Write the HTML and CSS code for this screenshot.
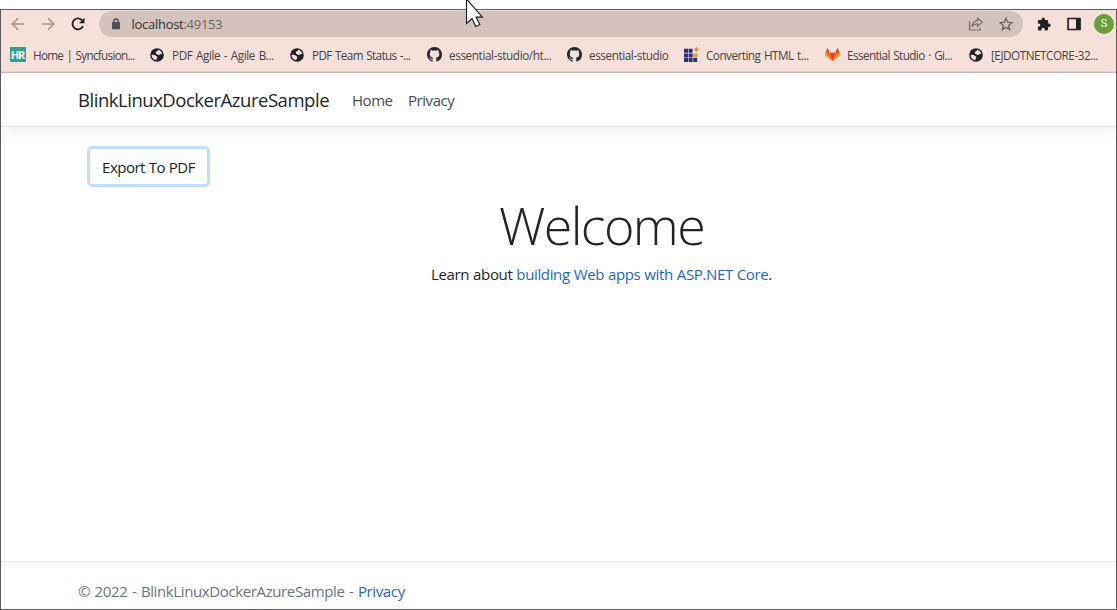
FILE: index.html
```html
<!DOCTYPE html>
<html lang="en">
<head>
<meta charset="utf-8">
<title>BlinkLinuxDockerAzureSample</title>
<link rel="stylesheet" href="styles.css">
</head>
<body>
<svg class="defs" width="0" height="0" aria-hidden="true">
  <symbol id="globe" viewBox="0 0 14 14"><circle cx="7" cy="7" r="6.8" fill="#202124"/><path d="M1.500 7.200C3 6.400 4.800 6.700 5.500 7.600c.5.800 1.700.4 1.800 1.600.1 1-.9 1.200-.8 2.900C3.800 12 1.700 9.800 1.500 7.200ZM5.800 4.600c.2-1.300 1.700-1.100 2.100-2 .2-.4.2-.6.3-.9 2 .5 3.500 1.900 4 3.900-.8.8-1.600.4-2.300 1-.6.6-1.500.7-2.100.1-.6-.7-2.200-.4-2-2.100Z" fill="#f6e1da"/></symbol>
  <symbol id="github" viewBox="0 0 16 16"><path fill="#24292f" d="M8 0C3.580 0 0 3.580 0 8c0 3.540 2.290 6.530 5.470 7.590.4.070.55-.17.55-.38 0-.19-.01-.82-.01-1.490-2.010.37-2.530-.49-2.690-.94-.09-.23-.48-.94-.82-1.130-.28-.15-.68-.52-.01-.53.63-.01 1.080.58 1.230.82.72 1.210 1.870.87 2.330.66.07-.52.28-.87.51-1.070-1.780-.2-3.640-.89-3.640-3.950 0-.87.31-1.590.82-2.150-.08-.2-.36-1.020.08-2.120 0 0 .67-.21 2.200.82.64-.18 1.320-.27 2-.27s1.360.09 2 .27c1.530-1.040 2.200-.82 2.200-.82.44 1.100.16 1.920.08 2.120.51.56.82 1.270.82 2.150 0 3.070-1.870 3.750-3.650 3.950.29.25.54.73.54 1.480 0 1.070-.01 1.930-.01 2.200 0 .21.15.46.55.38A8.010 8.010 0 0 0 16 8c0-4.420-3.580-8-8-8Z"/></symbol>
</svg>
<div class="window">
  <header class="chrome">
    <div class="toolbar">
      <div class="nav-icons">
        <svg width="14" height="14" viewBox="0 0 14 14" fill="none" stroke="#a3928f" stroke-width="1.5"><path d="M13 7H1.500M7 1.300 1.300 7 7 12.700"/></svg>
        <svg width="14" height="14" viewBox="0 0 14 14" fill="none" stroke="#a3928f" stroke-width="1.500"><path d="M1 7h11.500M7 1.300 12.700 7 7 12.700"/></svg>
        <svg width="14" height="14" viewBox="0 0 14 14"><path d="M12 9.200A5.500 5.500 0 1 1 11.300 3.400L12.500 4.800" fill="none" stroke="#202124" stroke-width="1.800"/><path d="M13.500.8v5.500H8Z" fill="#202124"/></svg>
      </div>
      <div class="omnibox">
        <svg width="10" height="12" viewBox="0 0 10 12"><rect x="1" y="4" width="8" height="7.300" rx="1" fill="#4d5156"/><path d="M2.800 5V3.200a2.200 2.200 0 0 1 4.400 0V5" fill="none" stroke="#4d5156" stroke-width="1.300"/></svg>
        <span class="url">localhost<span class="port">:49153</span></span>
        <svg class="share" width="16" height="14" viewBox="0 0 16 14" fill="none" stroke="#746d6c" stroke-width="1.200"><path d="M1.500 4v9h10.700v-2.500M9.500 1.200 14.300 5.200 9.500 9.200V6.800C7 6.700 5 7.600 3.800 9.700 4.200 6.200 6.100 4 9.500 3.600Z"/></svg>
        <svg width="14" height="14" viewBox="0 0 14 14" fill="none" stroke="#65605f" stroke-width="1.300"><path d="m7 1.300 1.700 3.900 4.200.4-3.200 2.800 1 4.200L7 10.400l-3.700 2.200 1-4.200L1.100 5.600l4.200-.4Z"/></svg>
      </div>
      <div class="actions">
        <svg width="14" height="14" viewBox="1 0 23 24"><path fill="#202124" d="M21 11h-1.500V7c0-1.100-.9-2-2-2H14V3.500a2.800 2.800 0 0 0-5.600 0V5H4C2.900 5 2 5.900 2 7v4h1.700a2.900 2.900 0 0 1 0 5.700H2V21c0 1.100.9 2 2 2h4.200v-1.700a2.800 2.800 0 0 1 5.600 0V23h3.700c1.100 0 2-.9 2-2v-4H21a3 3 0 0 0 0-6Z"/></svg>
        <svg width="14" height="14" viewBox="0 0 14 14"><path d="M1.100 1.500h11.800v11H1.100Z" fill="none" stroke="#202124" stroke-width="1.700"/><path d="M9 1h4.500v12H9Z" fill="#202124"/></svg>
        <span class="avatar">S</span>
      </div>
    </div>
    <nav class="bookmarks">
      <a><span class="hr">HR</span><span class="b1">Home | Syncfusion...</span></a>
      <a><svg class="ico"><use href="#globe"/></svg><span class="b2">PDF Agile - Agile B...</span></a>
      <a><svg class="ico"><use href="#globe"/></svg><span class="b3">PDF Team Status -...</span></a>
      <a><svg class="ico git"><use href="#github"/></svg><span class="b4">essential-studio/ht...</span></a>
      <a><svg class="ico git"><use href="#github"/></svg><span class="b5">essential-studio</span></a>
      <a><svg class="ico git" viewBox="0 0 15 15"><path fill="#27317c" d="M0 1.800h4v4H0ZM4.600 1.800h4v4h-4ZM0 6.400h4v4H0ZM4.600 6.400h4v4h-4ZM0 11h4v4H0ZM4.600 11h4v4h-4ZM9.200 11h4v4h-4Z"/><path fill="#f7941d" d="M9.200 6.400h4v4h-4ZM12.400 0l2.600 2.600-2.600 2.600-2.600-2.600Z"/></svg><span class="b6">Converting HTML t...</span></a>
      <a><svg class="ico git" viewBox="0 0 16 16"><path fill="#fc6d26" d="m8 15-7.500-5.700L.2 7.500 2.700 1l2.200 5.200h6.200L13.300 1l2.500 6.500-.3 1.800Z"/><path fill="#e24329" d="m8 15-3.100-8.800h6.200ZM2.700 1l2.200 5.200H.7ZM13.300 1l2.200 5.200h-4.400Z"/><path fill="#fca326" d="M.7 6.200 8 15 .4 9.400Zm14.600 0L8 15l7.600-5.600Z"/></svg><span class="b7">Essential Studio · Gi...</span></a>
      <a><svg class="ico"><use href="#globe"/></svg><span class="b8">[EJDOTNETCORE-32...</span></a>
    </nav>
  </header>
  <div class="navbar">
    <a class="brand">BlinkLinuxDockerAzureSample</a>
    <a class="link home">Home</a>
    <a class="link privacy">Privacy</a>
  </div>
  <main>
    <button class="export"><span>Export To PDF</span></button>
    <div class="hero">
      <h1>Welcome</h1>
      <p>Learn about <a>building Web apps with ASP.NET Core</a>.</p>
    </div>
  </main>
  <footer><span>© 2022 - BlinkLinuxDockerAzureSample - <a>Privacy</a></span></footer>
</div>
<svg class="cursor" width="20" height="28" viewBox="0 0 20 28"><path d="M1.500-1v24.500L7 18.500l3.800 8 4-1.900-3.700-7.500h6.300Z" fill="#fff" stroke="#111827" stroke-width="1.100"/></svg>
</body>
</html>
```
FILE: styles.css
```css
* { box-sizing: border-box; }
body {
  margin: 0;
  height: 610px;
  padding-top: 9px;
  overflow: hidden;
  background: #fff;
  color: #212529;
  font: 15px/22px "Open Sans", "Noto Sans", sans-serif;
}
.defs { position: absolute; }
svg { display: block; flex: none; }
span, a { white-space: nowrap; }
.window {
  height: 601px;
  border: 1px solid #5d5b5c;
  display: flex;
  flex-direction: column;
}
.chrome {
  height: 63px;
  flex: none;
  background: #f6e1da;
  border-bottom: 1px solid #c9b9b4;
  box-shadow: inset 0 -1px #e8d5cf;
}
.toolbar { display: flex; align-items: center; height: 28px; padding: 1px 2px 1px 10px; }
.nav-icons { display: flex; gap: 16px; width: 88px; flex: none; }
.omnibox {
  display: flex;
  align-items: center;
  width: 924px;
  height: 26px;
  padding: 0 10px 0 12px;
  border-radius: 13px;
  background: #d4c2bc;
}
.url { margin-left: 10.5px; flex: 1; font-size: 13px; letter-spacing: -.28px; color: #303134; }
.port { color: #6b6463; }
.share { margin-right: 15px; }
.actions { display: flex; align-items: center; margin-left: 14px; gap: 16px; }
.avatar {
  width: 20px; height: 20px; margin-left: -3px;
  border-radius: 50%;
  background: #689f38;
  color: #fff;
  font: 11px/20px Roboto, sans-serif;
  text-align: center;
}
.bookmarks {
  display: grid;
  grid-template-columns: 139px 140px 137px 140px 117px 141px 144px 140px;
  padding: 1px 0 0 9px;
  height: 32px;
  align-items: center;
  font-size: 11.7px;
  line-height: 16px;
  word-spacing: 1px;
  color: #474241;
}
.bookmarks a { display: flex; align-items: center; }
.hr {
  width: 16px; height: 15px; margin-right: 7px;
  background: #2aa487;
  color: #fff;
  font: bold 11px/15px "Open Sans", sans-serif;
  letter-spacing: -1px;
  text-indent: -1px;
  text-align: center;
}
.b1 { letter-spacing: -.7px; }
.b2 { letter-spacing: -.4px; }
.b3 { letter-spacing: -.63px; }
.b4 { letter-spacing: -.37px; }
.b5 { letter-spacing: -.4px; }
.b6 { letter-spacing: -.5px; }
.b7 { letter-spacing: -.57px; }
.b8 { letter-spacing: -.46px; }
.ico { width: 14px; height: 14px; margin: 0 8px 0 1px; }
.git { width: 15px; height: 15px; margin: 0 7px 0 1px; }
.navbar {
  display: flex;
  align-items: center;
  height: 54px;
  flex: none;
  padding: 0 0 0 77px;
  border-bottom: 1px solid #e4e7ea;
  box-shadow: 0 6px 14px rgba(0, 0, 0, .055);
}
.brand { width: 274px; font-size: 18.500px; letter-spacing: -.47px; }
.link { color: #484b4d; letter-spacing: -.45px; }
.home { width: 56px; }
main { flex: 1; padding: 20px 0 0 87px; }
.export {
  display: block;
  width: 121px;
  height: 39px;
  padding: 1px 0 0;
  border: 0;
  border-radius: 4px;
  background: #fff;
  box-shadow: inset 0 0 0 2px #bfdeff, 0 0 0 1px #bfdeff;
  color: #212529;
  font: inherit;
  letter-spacing: -.52px;
  word-spacing: .5px;
}
.hero { width: 1027px; margin-top: 10px; text-align: center; letter-spacing: -.36px; word-spacing: .4px; }
h1 { margin: 0; font-weight: 300; font-size: 52px; line-height: 58px; letter-spacing: -1.6px; }
p { margin: 9px 0 0; }
.hero a, footer a { color: #1b66d2; }
footer {
  height: 48px;
  padding: 18px 0 0 77px;
  border-top: 1px solid #e4e7ea;
  color: #6c757d;
  letter-spacing: -.38px;
  word-spacing: 1px;
}
.cursor { position: absolute; left: 465px; top: 0; }
```
